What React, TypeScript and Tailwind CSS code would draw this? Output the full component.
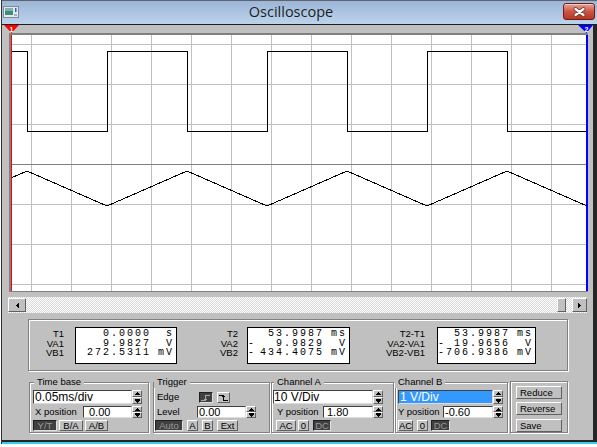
import type { ReactNode } from "react";

const raised =
  "border border-t-white border-l-white border-r-[#606060] border-b-[#606060] bg-[#c0c0c0] text-black";
const pressed =
  "border border-t-[#202020] border-l-[#202020] border-r-[#e0e0e0] border-b-[#e0e0e0] bg-[#404040] text-[#9a9a9a]";
const etched =
  "border border-[#808080] shadow-[inset_1px_1px_0_#fff,1px_1px_0_#fff]";

function UpArrow() {
  return (
    <svg width="5" height="3" viewBox="0 0 5 3" shapeRendering="crispEdges">
      <path d="M2 0h1v1h1v1h1v1H0V2h1V1h1z" fill="#000" />
    </svg>
  );
}

function DownArrow() {
  return (
    <svg width="5" height="4" viewBox="0 0 5 4" shapeRendering="crispEdges">
      <path d="M0 0h5v1H0z M0 1h5v1H4v1H3v1H2V3H1V2H0z" fill="#000" />
    </svg>
  );
}

function Spin() {
  return (
    <div className="flex h-full w-[10px] flex-col">
      <div className={`flex flex-1 items-center justify-center overflow-hidden ${raised}`}>
        <UpArrow />
      </div>
      <div className={`flex flex-1 items-center justify-center overflow-hidden ${raised}`}>
        <DownArrow />
      </div>
    </div>
  );
}

function Field({
  value,
  className = "",
  text = "text-[11px] pl-[1px]",
  selected = false,
}: {
  value: string;
  className?: string;
  text?: string;
  selected?: boolean;
}) {
  return (
    <div className={`flex ${className}`}>
      <div
        className={`flex min-w-0 flex-1 items-center border border-t-[#404040] border-l-[#404040] border-r-[#dcdcdc] border-b-[#dcdcdc] leading-none ${text} ${
          selected ? "bg-[#3399ff] text-white" : "bg-white text-black"
        }`}
      >
        {value}
      </div>
      <Spin />
    </div>
  );
}

function Btn({
  children,
  className = "",
  dark = false,
}: {
  children: ReactNode;
  className?: string;
  dark?: boolean;
}) {
  return (
    <div
      className={`flex items-center justify-center text-[9.5px] leading-none ${
        dark ? pressed : raised
      } ${className}`}
    >
      {children}
    </div>
  );
}

function Group({
  title,
  titleCls = "",
  className = "",
  children,
}: {
  title?: string;
  titleCls?: string;
  className?: string;
  children: ReactNode;
}) {
  return (
    <div className={`relative ${etched} ${className}`}>
      {title && (
        <span
          className={`absolute -top-[7px] bg-[#c0c0c0] px-[3px] text-[9.5px] leading-[12px] ${titleCls}`}
        >
          {title}
        </span>
      )}
      {children}
    </div>
  );
}

function Readout({
  labels,
  rows,
  labelW,
  gap,
  boxW,
}: {
  labels: string[];
  rows: [string, string, string][];
  labelW: string;
  gap: string;
  boxW: string;
}) {
  return (
    <>
      <div className={`${labelW} pt-[2px] text-right text-[9.5px] leading-[9.5px]`}>
        {labels.map((l) => (
          <div key={l}>{l}</div>
        ))}
      </div>
      <div
        className={`${gap} ${boxW} h-[37px] border border-black bg-white pt-[1px] pr-[2px] font-['Liberation_Mono',monospace] text-[10px] leading-[9.5px] tracking-[2px] whitespace-pre`}
      >
        {rows.map(([s, n, u]) => (
          <div key={n} className="flex h-[9.5px]">
            <span className="w-[8px] overflow-visible">{s}</span>
            <span className="flex-1 text-right">{n}</span>
            <span className="w-[23px] text-right">{u}</span>
          </div>
        ))}
      </div>
    </>
  );
}

function Screen() {
  const vLines = Array.from({ length: 14 }, (_, i) => 20 + i * 40);
  const hLines = Array.from({ length: 7 }, (_, i) => 9 + i * 40);

  return (
    <div className="ml-[7px] w-[579px] border-t-2 border-l-2 border-b border-[#808080] bg-white">
      <svg width="577" height="256" className="block" shapeRendering="crispEdges">
        {vLines.map((x) => (
          <line key={x} x1={x + 0.5} y1="0" x2={x + 0.5} y2="256" stroke="#c0c0c0" />
        ))}
        {hLines.map((y, i) => (
          <line
            key={y}
            x1="0"
            y1={y + 0.5}
            x2="577"
            y2={y + 0.5}
            stroke={i === 3 ? "#808080" : "#c0c0c0"}
          />
        ))}
        {/* channel A square */}
        <path
          d="M0 16.5H16.5V96.5H96.5V16.5H176.5V96.5H256.5V16.5H336.5V96.5H416.5V16.5H496.5V96.5H577"
          fill="none"
          stroke="#000"
        />
        {/* channel B triangle */}
        <polyline
          points="0,143 16,136 96,171 176,136 256,171 336,136 416,171 496,136 576,171"
          fill="none"
          stroke="#000"
        />
        <rect x="0" y="0" width="1" height="256" fill="#ff0000" />
        <rect x="575" y="0" width="2" height="256" fill="#0000ff" />
      </svg>
    </div>
  );
}

export default function App() {
  return (
    <div className="h-[447px] w-[597px] overflow-hidden bg-white font-['Liberation_Sans',Arial,sans-serif] text-black">
      <div className="ml-px w-[596px] border-l border-[#303030]">
        {/* Title bar */}
        <div className="flex h-[25px] items-start border-y border-t-[#5b6470] border-b-[#1e1e1e] bg-linear-to-b from-[#9db6d7] to-[#bcd3ec]">
          <div className="mt-[5px] ml-[1px]">
            <svg width="16" height="12" viewBox="0 0 16 12">
              <rect x="0.5" y="0.5" width="15" height="11" fill="#e4e8ec" stroke="#7d8c99" />
              <rect x="2" y="2" width="8" height="7" fill="#3f8c7c" />
              <rect x="2" y="2" width="8" height="3" fill="#79b6a6" />
              <rect x="12" y="2" width="1.5" height="4" fill="#2a62c8" />
              <rect x="11" y="8" width="3" height="2" fill="#a7b0b8" />
            </svg>
          </div>
          <div className="flex-1 text-center font-['Open_Sans',sans-serif] text-[14.5px] leading-[21px] text-[#1e1e1e]">
            Oscilloscope
          </div>
          <div className="mt-[2px] mr-[2px] flex h-[17px] w-[32px] items-center justify-center rounded-[3px] border border-[#6b1f14] bg-linear-to-b from-[#e6a397] via-[#cc5444] to-[#b93424] shadow-[inset_0_1px_0_rgba(255,255,255,0.45)]">
            <svg width="13" height="10" viewBox="0 0 13 10">
              <path d="M2.5 2 L10.5 8 M10.5 2 L2.5 8" stroke="#5a2a22" strokeWidth="3.6" strokeLinecap="round" />
              <path d="M2.5 2 L10.5 8 M10.5 2 L2.5 8" stroke="#fff" strokeWidth="2.2" strokeLinecap="round" />
            </svg>
          </div>
        </div>

        {/* Body */}
        <div className="flex h-[417px] flex-col border-r-4 border-b-2 border-[#262626] bg-[#c0c0c0]">
          {/* cursor markers */}
          <div className="flex h-[8px] justify-between pl-[2px]">
            <svg width="15" height="8" viewBox="0 0 15 8">
              <polygon points="0,0 15,0 7.5,8" fill="#ff0000" />
              <text x="7.5" y="6.5" fill="#fff" fontSize="7" fontWeight="bold" textAnchor="middle" fontFamily="Liberation Sans, Arial, sans-serif">
                1
              </text>
            </svg>
            <svg width="15" height="8" viewBox="0 0 15 8">
              <polygon points="0,0 15,0 8.5,8" fill="#0000ff" />
              <text x="8.5" y="6.5" fill="#fff" fontSize="7" fontWeight="bold" textAnchor="middle" fontFamily="Liberation Sans, Arial, sans-serif">
                2
              </text>
            </svg>
          </div>

          <Screen />

          {/* scroll bar */}
          <div className="mt-[5px] ml-[6px] flex h-[16px] w-[579px] items-center bg-[image:repeating-conic-gradient(#ffffff_0%_25%,#d9d9d9_0%_50%)] bg-[length:2px_2px]">
            <div className={`flex h-[14px] w-[18px] items-center justify-center ${raised}`}>
              <svg width="3" height="5" viewBox="0 0 3 5" shapeRendering="crispEdges">
                <path d="M2 0h1v5H2V4H1V3H0V2h1V1h1z" fill="#000" />
              </svg>
            </div>
            <div className="flex-1" />
            <div className={`h-[14px] w-[9px] ${raised}`} />
            <div className="w-[6px]" />
            <div className={`flex h-[14px] w-[15px] items-center justify-center ${raised}`}>
              <svg width="3" height="5" viewBox="0 0 3 5" shapeRendering="crispEdges">
                <path d="M0 0h1v1h1v1h1v1H2v1H1v1H0z" fill="#000" />
              </svg>
            </div>
          </div>

          {/* readouts */}
          <div className={`mt-[6px] ml-[26px] flex h-[52px] w-[540px] items-start pt-[7px] ${etched}`}>
            <Readout
              labels={["T1", "VA1", "VB1"]}
              rows={[
                ["", "0.0000", "s"],
                ["", "9.9827", "V"],
                ["", "272.5311", "mV"],
              ]}
              labelW="w-[35px]"
              gap="ml-[11px]"
              boxW="w-[102px]"
            />
            <Readout
              labels={["T2", "VA2", "VB2"]}
              rows={[
                ["", "53.9987", "ms"],
                ["-", "9.9829", "V"],
                ["-", "434.4075", "mV"],
              ]}
              labelW="w-[61px]"
              gap="ml-[9px]"
              boxW="w-[103px]"
            />
            <Readout
              labels={["T2-T1", "VA2-VA1", "VB2-VB1"]}
              rows={[
                ["", "53.9987", "ms"],
                ["-", "19.9656", "V"],
                ["-", "706.9386", "mV"],
              ]}
              labelW="w-[75px]"
              gap="ml-[12px]"
              boxW="w-[99px]"
            />
          </div>

          {/* controls */}
          <div className="mt-[10px] ml-[27px] flex items-start">
            {/* Time base */}
            <Group title="Time base" titleCls="left-[4px]" className="mt-[1px] h-[51px] w-[120px]">
              <div className="flex flex-col pt-[7px] pr-[6px] pl-[3px]">
                <Field value="0.05ms/div" className="h-[14px]" text="text-[12px] pl-[1px]" />
                <div className="mt-[2px] flex h-[12px] items-center">
                  <span className="pl-[2px] text-[9.5px] leading-none">X position</span>
                  <Field value="0.00" className="ml-auto h-[12px] w-[59px]" text="text-[11px] pl-[5px]" />
                </div>
                <div className="mt-[2px] flex h-[11px]">
                  <Btn dark className="w-[24px]">Y/T</Btn>
                  <Btn className="ml-[2px] w-[24px]">B/A</Btn>
                  <Btn className="ml-[2px] w-[23px]">A/B</Btn>
                </div>
              </div>
            </Group>

            {/* Trigger */}
            <Group title="Trigger" titleCls="left-0" className="mt-[1px] ml-[4px] h-[51px] w-[117px]">
              <div className="flex flex-col pt-[7px] pl-[1px]">
                <div className="flex h-[14px] items-center pl-[2px]">
                  <span className="w-[42px] text-[9.5px] leading-none">Edge</span>
                  <Btn dark className="h-[11px] w-[14px]">
                    <svg width="10" height="7" viewBox="0 0 10 7" shapeRendering="crispEdges">
                      <path d="M0 6.5H4.5V1.5H9" fill="none" stroke="#a8a8a8" />
                      <path d="M4 4h1v1H4z M3 5h3v1H3z" fill="#a8a8a8" />
                    </svg>
                  </Btn>
                  <Btn className="ml-[4px] h-[11px] w-[13px]">
                    <svg width="9" height="7" viewBox="0 0 9 7" shapeRendering="crispEdges">
                      <path d="M0 1.5H4.5V6.5H9" fill="none" stroke="#000" />
                      <path d="M3 2h3v1H3z M4 3h1v1H4z" fill="#000" />
                    </svg>
                  </Btn>
                </div>
                <div className="mt-[2px] flex h-[12px] items-center pl-[2px]">
                  <span className="w-[40px] text-[9.5px] leading-none">Level</span>
                  <Field value="0.00" className="h-[12px] w-[59px]" />
                </div>
                <div className="mt-[2px] flex h-[11px] gap-[4px]">
                  <Btn dark className="w-[28px]">Auto</Btn>
                  <Btn className="w-[11px]">A</Btn>
                  <Btn className="w-[11px]">B</Btn>
                  <Btn className="w-[21px]">Ext</Btn>
                </div>
              </div>
            </Group>

            {/* Channel A */}
            <Group title="Channel A" titleCls="left-[2px]" className="mt-[1px] ml-[1px] h-[51px] w-[123px]">
              <div className="flex flex-col pt-[7px] pl-[1px]">
                <Field value="10 V/Div" className="h-[14px] w-[110px]" text="text-[12px] pl-0" />
                <div className="mt-[2px] flex h-[12px] items-center">
                  <span className="w-[50px] pl-[4px] text-[9.5px] leading-none">Y position</span>
                  <Field value="1.80" className="h-[12px] w-[60px]" text="text-[11px] pl-[3px]" />
                </div>
                <div className="mt-[2px] flex h-[11px] pl-[3px]">
                  <Btn className="w-[20px]">AC</Btn>
                  <Btn className="ml-[2px] w-[11px]">0</Btn>
                  <Btn dark className="ml-[4px] w-[18px]">DC</Btn>
                </div>
              </div>
            </Group>

            {/* Channel B */}
            <Group title="Channel B" titleCls="-left-[1px]" className="mt-[1px] ml-[1px] h-[51px] w-[113px]">
              <div className="flex flex-col pt-[7px] pl-[2px]">
                <Field value="1 V/Div" selected className="h-[14px] w-[105px]" text="text-[12px] pl-[1px]" />
                <div className="mt-[2px] flex h-[12px] items-center">
                  <span className="w-[45px] text-[9.5px] leading-none">Y position</span>
                  <Field value="-0.60" className="h-[12px] w-[60px]" />
                </div>
                <div className="mt-[2px] flex h-[11px]">
                  <Btn className="w-[15px]">AC</Btn>
                  <Btn className="ml-[4px] w-[11px]">0</Btn>
                  <Btn dark className="ml-[3px] w-[19px]">DC</Btn>
                </div>
              </div>
            </Group>

            {/* Buttons */}
            <Group className="ml-[2px] h-[52px] w-[58px]">
              <div className="flex flex-col pt-[4px] pl-[5px]">
                <div className={`flex h-[13px] w-[46px] items-center pl-[3px] text-[9.5px] leading-none ${raised}`}>
                  Reduce
                </div>
                <div className={`mt-[3px] flex h-[13px] w-[46px] items-center pl-[3px] text-[9.5px] leading-none ${raised}`}>
                  Reverse
                </div>
                <div className={`mt-[4px] flex h-[13px] w-[46px] items-center pl-[3px] text-[9.5px] leading-none ${raised}`}>
                  Save
                </div>
              </div>
            </Group>
          </div>
        </div>
        <div className="h-[2px] bg-[#35cdf2]" />
      </div>
    </div>
  );
}
